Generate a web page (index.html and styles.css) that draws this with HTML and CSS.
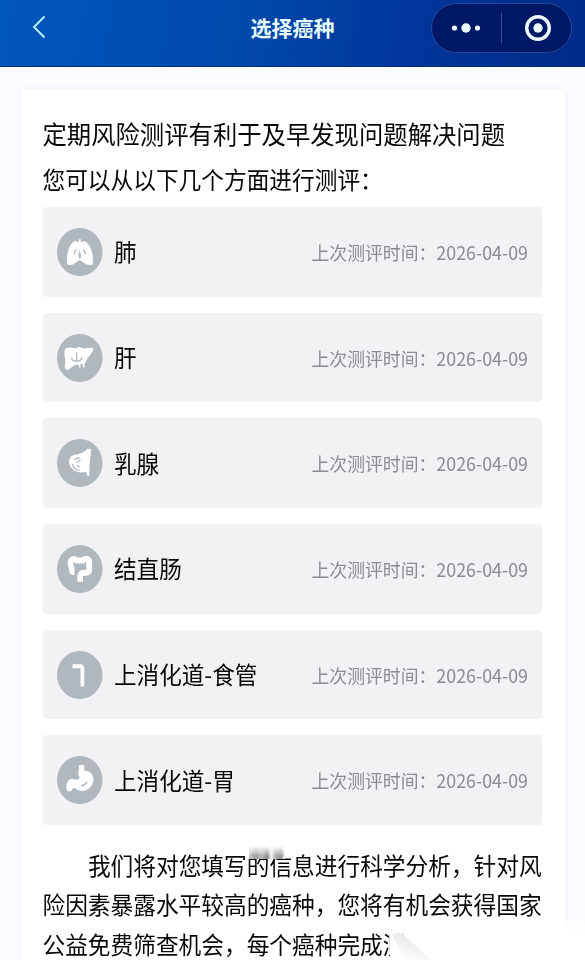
FILE: index.html
```html
<!DOCTYPE html>
<html lang="zh-CN">
<head>
<meta charset="utf-8">
<title>选择癌种</title>
<link rel="stylesheet" href="styles.css">
</head>
<body>
<header class="navbar">
  <svg class="back" viewBox="0 0 14 24"><path d="M12.500 1.500 2 12l10.500 10.500"/></svg>
  <h1 class="title">选择癌种</h1>
  <div class="capsule">
    <svg class="dots" viewBox="0 0 30 12"><circle cx="3.500" cy="6" r="2.600"/><circle cx="15" cy="6" r="4.700"/><circle cx="26.500" cy="6" r="2.600"/></svg>
    <span class="divider"></span>
    <svg class="target" viewBox="0 0 28 28"><circle class="ring" cx="14" cy="14" r="11.300"/><circle cx="14" cy="14" r="4.700"/></svg>
  </div>
</header>
<main class="card">
  <p class="lead"><span class="t">定期风险测评有利于及早发现问题解决问题</span></p>
  <p class="sub"><span class="t">您可以从以下几个方面进行测评：</span></p>
  <ul class="list">
    <li class="row">
      <svg class="icon" viewBox="0 0 60 60" preserveAspectRatio="none"><circle class="disc" cx="30" cy="30" r="30"/><path d="M28.800 14h2.600v4q3-2 6-1c5 3 8 9 9.500 16q1 7 0 13-8 1-12-3l-5-3-5 3q-4 4-11 3-2-7 0-14c1-6 4-12 8-15q3-2 6.900 1z"/><path class="cut thin" d="M25.500 27q-3 2-3 6M34.500 27q3 2 3 6"/><path class="hole" d="M30 28l2 7-2 4-2-4z"/></svg>
      <span class="name t">肺</span><span class="time t">上次测评时间：2026-04-09</span>
    </li>
    <li class="row">
      <svg class="icon" viewBox="0 0 60 60" preserveAspectRatio="none"><circle class="disc" cx="30" cy="30" r="30"/><path d="M11 18q3-1 8-1l5 1 5-2 6 2 12-1q2 2 0 5l-7 9-4 7-3-1-3 2-4-1-6 3-5 4q-4 0-5-4 2-8 0-13-1-6 1-10z"/><path class="cut thin" d="M26 23v11M19 30q1 4 7 4 6 0 7-5"/><path d="M34 36l2 6M30 37v5" stroke="#fff" stroke-width="2"/></svg>
      <span class="name t">肝</span><span class="time t">上次测评时间：2026-04-09</span>
    </li>
    <li class="row">
      <svg class="icon" viewBox="0 0 60 60" preserveAspectRatio="none"><circle class="disc" cx="30" cy="30" r="30"/><path d="M41 12.500q3-1 4 1l-.500 7q-2 6-1.500 12l-.500 13.500h-3l-1-5q-9 2-15-1-7-4-7.500-11 0-7 6-9 12-1 19-8.500z"/><path class="cut thin" d="M23 26q3-3 7-2M26 29l5-3M20.500 31q1 8 9 8M26 33l4 2"/></svg>
      <span class="name t">乳腺</span><span class="time t">上次测评时间：2026-04-09</span>
    </li>
    <li class="row">
      <svg class="icon" viewBox="0 0 60 60" preserveAspectRatio="none"><circle class="disc" cx="30" cy="30" r="30"/><path class="colon" d="M23 34q-3.500 0-3.500-4l-1.500-6q-1-6 4-6.500 2 0 4 2h8q3-3 6-2 4 2 2 7 2 9-2 10l-6 .500q-3.500 1-3.500 4v7"/></svg>
      <span class="name t">结直肠</span><span class="time t">上次测评时间：2026-04-09</span>
    </li>
    <li class="row">
      <svg class="icon" viewBox="0 0 60 60" preserveAspectRatio="none"><circle class="disc" cx="30" cy="30" r="30"/><path class="tube" d="M20.500 19H31q2.500 0 2.500 3v22.500"/></svg>
      <span class="name t">上消化道-食管</span><span class="time t">上次测评时间：2026-04-09</span>
    </li>
    <li class="row">
      <svg class="icon" viewBox="0 0 60 60" preserveAspectRatio="none"><circle class="disc" cx="30" cy="30" r="30"/><path d="M28.500 12q4-2 7.500 0v6.500c7 0 12 4 12 10.500s-4 11-9 13.500-11 1-14-1.500-6 0-6 3h-5.500q-2.500-6 0-11 3-5 9-4 6 2 7.500-2c-2-3-3-6-1-10z"/><path class="cut" d="M32 37q5 0 7.500-5"/></svg>
      <span class="name t">上消化道-胃</span><span class="time t">上次测评时间：2026-04-09</span>
    </li>
  </ul>
  <div class="note">
    <p class="line indent"><span class="t">我们将对您填写的信息进行科学分析，针对风</span><i class="smudge"></i></p>
    <p class="line"><span class="t">险因素暴露水平较高的癌种，您将有机会获得国家</span></p>
    <p class="line"><span class="t">公益免费筛查机会，每个癌种完成测</span></p>
  </div>
</main>
<svg class="corner" viewBox="0 0 197 46"><defs><linearGradient id="fold" x1="0.200" y1="1" x2="0.600" y2="0.200"><stop offset="0" stop-color="#fff"/><stop offset="1" stop-color="#e9e9e9"/></linearGradient><linearGradient id="haze" x1="0" y1="0" x2="0" y2="1"><stop offset="0" stop-color="#fff" stop-opacity="0"/><stop offset="0.400" stop-color="#fff"/></linearGradient></defs><path fill="url(#haze)" d="M160 0h37v46h-37z"/><path fill="#fff" d="M2 20h170v26H2z"/><path fill="url(#fold)" d="M4 21q6-4 12 0l27 25H18z"/></svg>
</body>
</html>
```

FILE: styles.css
```css
* { box-sizing: border-box; margin: 0; padding: 0; }
body {
  position: relative;
  height: 960px;
  overflow: hidden;
  background: #fafaff;
  color: #080808;
  font-family: "Noto Sans CJK SC", sans-serif;
}
.t { display: inline-block; transform: scaleY(1.05); white-space: nowrap; }
.navbar {
  height: 67px;
  display: grid;
  grid-template-columns: 1fr auto 1fr;
  align-items: center;
  padding: 0 13px 11px;
  background: linear-gradient(100deg, #0057bd 0%, #0049aa 42%, #00369a 70%, #002a88 100%);
  border-bottom: 1px solid #003078;
}
.back { width: 14px; height: 24px; margin: 0 0 2px 19px; fill: none; stroke: #b9f2ff; stroke-width: 1.900; }
.title { margin-bottom: 2px; font-size: 21px; font-weight: 700; line-height: 30px; color: #e6fbff; }
.capsule {
  justify-self: end;
  width: 141px;
  height: 50px;
  display: flex;
  align-items: center;
  justify-content: space-between;
  padding: 0 19px;
  border: 1px solid #234a9d;
  border-radius: 25px;
  background: #001966;
  fill: #edfaff;
}
.dots { width: 30px; height: 12px; }
.divider { width: 1px; height: 30px; margin-right: 3px; background: #34539d; }
.target { width: 28px; height: 28px; }
.ring { fill: none; stroke: #edfaff; stroke-width: 3.400; }
.card {
  margin: 22px 20px 0 21px;
  height: 900px;
  padding: 20px 22px 0 21.500px;
  background: #fff;
  border-radius: 4px;
  box-shadow: 0 0 5px rgba(120, 120, 190, .09);
}
.lead { height: 48px; font-size: 24.350px; line-height: 48px; }
.sub { height: 45px; font-size: 22.700px; line-height: 46px; }
.list { list-style: none; display: grid; gap: 16px; margin: 5px 1px 0 0; }
.row {
  height: 89.700px;
  display: flex;
  align-items: center;
  padding: 0 14px;
  border-radius: 4px;
  background: #f2f2f5;
}
.icon { width: 45.500px; height: 48px; margin-right: 12px; overflow: visible; fill: #fff; }
.disc, .hole { fill: #b0b7bd; }
.cut { fill: none; stroke: #b0b7bd; stroke-width: 2; }
.thin { stroke-width: 1.600; }
.colon { fill: none; stroke: #fff; stroke-width: 7.500; stroke-linejoin: round; }
.tube { fill: none; stroke: #fff; stroke-width: 5; }
.name { font-size: 22.600px; }
.time { margin-left: auto; font-size: 17.850px; color: #8b8b91; }
.note { margin-top: 20.800px; font-size: 22.700px; }
.line { position: relative; height: 39.300px; line-height: 39.300px; }
.indent { padding-left: 2em; }
.smudge {
  position: absolute;
  left: 206px;
  top: 0;
  width: 36px;
  height: 13px;
  background: linear-gradient(90deg, #ccc, #999 20%, #bbb 35%, #888 50%, #eee 62%, #aaa 75%, #999 90%, #fff);
  -webkit-mask-image: linear-gradient(transparent, #000 80%);
  mask-image: linear-gradient(transparent, #000 80%);
}
.corner { position: absolute; right: 0; bottom: 0; width: 197px; height: 46px; }
```
